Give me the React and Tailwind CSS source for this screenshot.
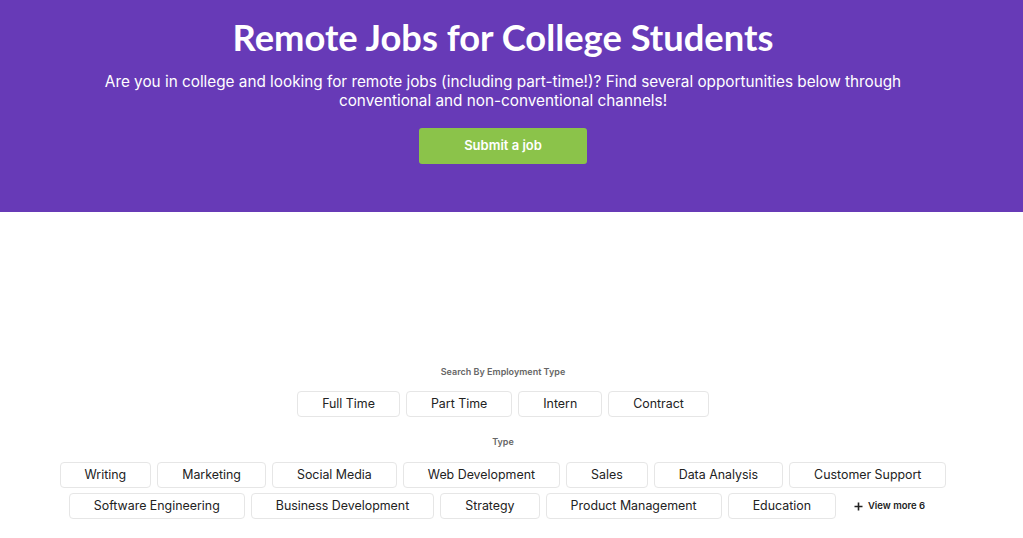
import React from "react";

const employment = ["Full Time", "Part Time", "Intern", "Contract"];
const row = [
  "Writing",
  "Marketing",
  "Social Media",
  "Web Development",
  "Sales",
  "Data Analysis",
  "Customer Support",
  "Software Engineering",
  "Business Development",
  "Strategy",
  "Product Management",
  "Education",
];

function Chip({ children }) {
  return (
    <button className="h-[26px] px-6 rounded-[4px] border border-[#e6e6e6] bg-white text-[12.4px] text-[#222] leading-none font-['Inter',sans-serif]">
      {children}
    </button>
  );
}

export default function App() {
  return (
    <div className="w-full min-h-[538px] bg-white font-['Inter',sans-serif]">
      <header className="bg-[#673ab7] h-[212px] pr-[17px] flex flex-col items-center pt-[13px]">
        <h1 className="text-white font-['Lato',sans-serif] font-bold text-[36.3px] leading-[48px]">
          Remote Jobs for College Students
        </h1>
        <p className="mt-[11px] text-white text-[15.3px] leading-[19px] text-center max-w-[820px]">
          Are you in college and looking for remote jobs (including part-time!)? Find several opportunities below through conventional and non-conventional channels!
        </p>
        <button className="mt-[18px] w-[168px] h-[36px] rounded-[3px] bg-[#8bc34a] text-white text-[13px] font-semibold">
          Submit a job
        </button>
      </header>
      <section className="pr-[17px] pt-[154px] flex flex-col items-center">
        <div className="text-[9px] font-semibold text-[#666] leading-[12px]">Search By Employment Type</div>
        <div className="mt-[13px] flex gap-[6px] justify-center">
          {employment.map((e) => (
            <Chip key={e}>{e}</Chip>
          ))}
        </div>
        <div className="mt-[19px] text-[9px] font-semibold text-[#666] leading-[12px]">Type</div>
        <div className="mt-[14px] flex flex-wrap justify-center gap-x-[6px] gap-y-[5px] max-w-[1000px]">
          {row.map((e) => (
            <Chip key={e}>{e}</Chip>
          ))}
          <button className="h-[26px] px-3 flex items-center gap-[5px] text-[9.5px] font-semibold text-[#222]">
            <svg width="9" height="9" viewBox="0 0 9 9">
              <path d="M4.5 0.5v8M0.5 4.5h8" stroke="#222" strokeWidth="1.6" />
            </svg>
            View more 6
          </button>
        </div>
      </section>
    </div>
  );
}
